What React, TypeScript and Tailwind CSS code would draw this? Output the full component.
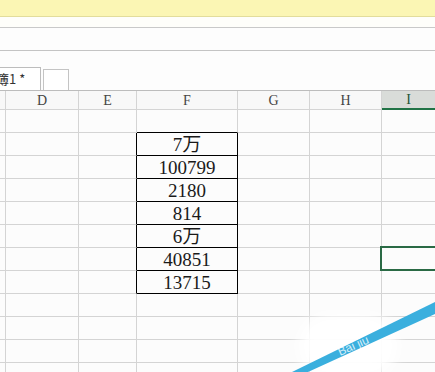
const cols = [
  { key: 'D', w: 'w-[73px]' },
  { key: 'E', w: 'w-[58px]' },
  { key: 'F', w: 'w-[101px]' },
  { key: 'G', w: 'w-[72px]' },
  { key: 'H', w: 'w-[72px]' },
];

const data = ['7万', '100799', '2180', '814', '6万', '40851', '13715'];

const serif = { fontFamily: '"Liberation Serif", "Noto Sans CJK SC", serif' };

function Row({ idx }: { idx: number }) {
  // idx 0 is the empty row above the block, 1..7 hold the values
  const inBlock = idx >= 1 && idx <= 7;
  const aboveBlock = idx === 0;
  return (
    <div className="flex h-[23px]">
      <div className="w-[6px] shrink-0 border-r border-b border-[#d4d4d4]" />
      <div className="w-[73px] shrink-0 border-r border-b border-[#d4d4d4]" />
      <div
        className={`w-[58px] shrink-0 border-b border-[#d4d4d4] border-r ${inBlock ? 'border-r-black' : ''}`}
      />
      <div
        className={`w-[101px] shrink-0 border-r border-b flex items-center justify-center text-[19px] text-[#1a1a1a] leading-none ${
          inBlock ? 'border-black' : aboveBlock ? 'border-[#d4d4d4] border-b-black' : 'border-[#d4d4d4]'
        }`}
        style={serif}
      >
        {inBlock ? data[idx - 1] : null}
      </div>
      <div className="w-[72px] shrink-0 border-r border-b border-[#d4d4d4]" />
      <div className="w-[72px] shrink-0 border-r border-b border-[#d4d4d4]" />
      <div className="flex-1 border-b border-[#d4d4d4] relative">
        {idx === 6 && (
          <div className="absolute -top-[2px] -left-[2px] -right-[4px] -bottom-[1px] border-2 border-[#2a6a45]" />
        )}
      </div>
    </div>
  );
}

export default function App() {
  return (
    <div className="w-[435px] h-[372px] overflow-hidden relative bg-[#fcfcfc] select-none">
      {/* message bar */}
      <div className="h-[17px] bg-[#fbf6b4] border-b border-[#e2dd9c]" />
      <div className="h-[11px] bg-[#fefefa] border-b border-[#c9c9c9]" />
      <div className="h-[23px] bg-[#fdfdfd] border-b border-[#c4c4c4]" />

      {/* sheet tabs */}
      <div className="h-[39px] flex items-end gap-[2px] bg-[#fdfdfd]">
        <div
          className="w-[45px] h-[23px] border-t border-r border-[#bdbdbd] bg-white flex items-center text-[13px] text-[#333] -ml-[4px]"
          style={{ fontFamily: '"Noto Sans CJK SC", "Liberation Sans", sans-serif' }}
        >
          簿1 *
        </div>
        <div className="w-[26px] h-[21px] border-t border-l border-r border-[#c4c4c4] bg-white" />
      </div>

      {/* column header */}
      <div className="flex h-[20px] border-t border-[#bcbcbc] bg-[#f8f8f8]">
        <div className="w-[6px] shrink-0 border-r border-b border-[#d4d4d4]" />
        {cols.map((c) => (
          <div
            key={c.key}
            className={`${c.w} shrink-0 border-r border-b border-[#d4d4d4] flex items-center justify-center text-[14px] text-[#444]`}
            style={{ fontFamily: '"Liberation Serif", serif' }}
          >
            {c.key}
          </div>
        ))}
        <div
          className="flex-1 border-b-2 border-[#217346] bg-[#d9dcd9] flex items-center justify-center text-[14px] text-[#1f5436]"
          style={{ fontFamily: '"Liberation Serif", serif' }}
        >
          I
        </div>
      </div>

      {Array.from({ length: 12 }).map((_, i) => (
        <Row key={i} idx={i} />
      ))}

      {/* watermark */}
      <div className="absolute left-[298px] top-[314px] w-[100px] h-[64px] bg-white/95 blur-[7px] rounded-full" />
      <svg className="absolute inset-0 pointer-events-none" width="435" height="372" viewBox="0 0 435 372">
        <polygon points="292,372 308,372 435,314 435,302" fill="#3aafde" />
        <text
          x="340"
          y="356"
          fill="#ffffff"
          fillOpacity="0.8"
          fontSize="12"
          transform="rotate(-24 340 356)"
          style={{ fontFamily: '"Liberation Sans", sans-serif' }}
        >
          Bai  jiu
        </text>
      </svg>
    </div>
  );
}
